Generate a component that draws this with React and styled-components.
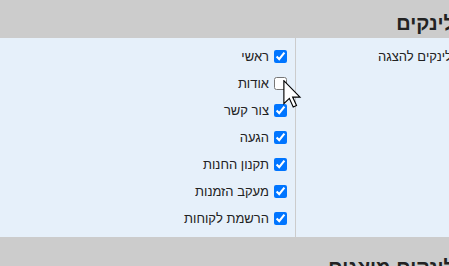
import React from 'react';
import styled, { createGlobalStyle } from 'styled-components';

const GlobalStyle = createGlobalStyle`
    html, body {
        margin: 0;
        padding: 0;
        overflow: hidden;
        background: #cccccc;
    }
`;

const Page = styled.div`
    direction: rtl;
    position: relative;
    margin-top: -7px;
    margin-right: -3px;
    font-family: "Liberation Sans", Arial, sans-serif;
    color: #222;
`;

const SectionHeader = styled.div`
    background: #cccccc;
    height: 45px;
    box-sizing: border-box;
    padding-top: 18px;

    h2 {
        margin: 0 -3px 0 0;
        font-size: 20px;
        font-weight: bold;
        line-height: 24px;
        color: #222;
        white-space: nowrap;
    }
`;

const Table = styled.div`
    display: grid;
    grid-template-columns: 157px 1fr;
    background: #e6f0fa;
`;

const TitleCell = styled.div`
    border-left: 1px solid #cccccc;
    padding: 5px 0;
    font-size: 13px;
    line-height: 27px;
    white-space: nowrap;
`;

const ListCell = styled.div`
    padding: 5px 8px 5px 0;
    display: flex;
    flex-direction: column;
`;

const Option = styled.label`
    display: flex;
    align-items: center;
    gap: 4px;
    height: 27px;
    font-size: 13px;

    input {
        margin: 0 0 0 1px;
        width: 13px;
        height: 13px;
    }
`;

const Cursor = styled.svg`
    position: absolute;
    top: 87px;
    right: 150px;
    pointer-events: none;
`;

const links = [
    { name: 'ראשי', on: true },
    { name: 'אודות', on: false },
    { name: 'צור קשר', on: true },
    { name: 'הגעה', on: true },
    { name: 'תקנון החנות', on: true },
    { name: 'מעקב הזמנות', on: true },
    { name: 'הרשמת לקוחות', on: true },
];

function App() {
    return (
        <Page>
            <GlobalStyle />
            <SectionHeader>
                <h2>לינקים</h2>
            </SectionHeader>
            <Table>
                <TitleCell>לינקים להצגה</TitleCell>
                <ListCell>
                    {links.map(item => (
                        <Option key={item.name}>
                            <input type="checkbox" defaultChecked={item.on} />
                            {item.name}
                        </Option>
                    ))}
                </ListCell>
            </Table>
            <SectionHeader>
                <h2>לינקים מוצגים</h2>
            </SectionHeader>
            <Cursor width="19" height="28" viewBox="0 0 13 19.5">
                <path
                    d="M0.5 0.5 L0.5 16.5 L4.3 12.8 L7 18.8 L9.3 17.8 L6.6 11.9 L11.7 11.9 Z"
                    fill="#fff"
                    stroke="#000"
                    strokeWidth="0.8"
                    strokeLinejoin="miter"
                />
            </Cursor>
        </Page>
    );
}

export default App;
